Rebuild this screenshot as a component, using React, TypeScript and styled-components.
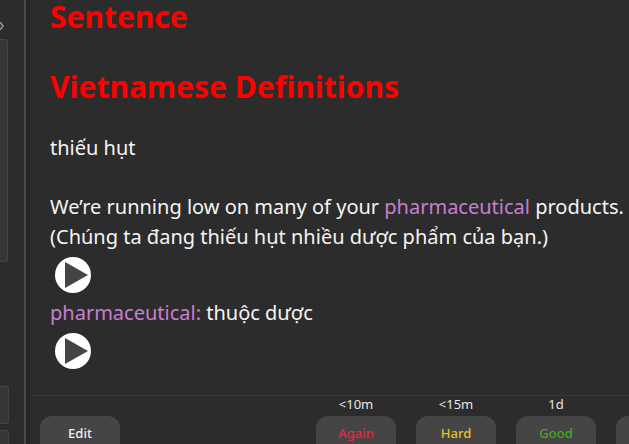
import React from "react";
import styled, { createGlobalStyle } from "styled-components";

const GlobalStyle = createGlobalStyle`
  html, body {
    margin: 0;
    padding: 0;
    width: 629px;
    height: 444px;
    overflow: hidden;
    background: #2c2c2c;
  }
`;

const answers = [
  { id: "again", due: "<10m", label: "Again", color: "#e02a44" },
  { id: "hard", due: "<15m", label: "Hard", color: "#e6c024" },
  { id: "good", due: "1d", label: "Good", color: "#42ab1e" },
  { id: "easy", due: "", label: "", color: "#3f8ad9" },
];

function PlayButton() {
  return (
    <ReplayIcon viewBox="0 0 36 36" aria-hidden="true">
      <circle cx="18" cy="18" r="18" fill="#ffffff" />
      <path d="M10 5 L33 18 L10 31 Z" fill="#444444" />
    </ReplayIcon>
  );
}

export default function App() {
  return (
    <>
      <GlobalStyle />
      <Window>
        <Sidebar>
          <Chevron viewBox="0 0 4 8" aria-hidden="true">
            <path d="M0 0 L3 4 L0 8" fill="none" stroke="#9a9a9a" strokeWidth="1.4" />
          </Chevron>
          <SidePanel />
          <SideBox />
          <SideBoxSmall />
        </Sidebar>
        <Divider />
        <Main>
          <Card>
            <Heading>Sentence</Heading>
            <Heading>Vietnamese Definitions</Heading>
            <Line>thiếu hụt</Line>
            <Sentence>
              We’re running low on many of your <Term>pharmaceutical</Term> products.
            </Sentence>
            <Translation>(Chúng ta đang thiếu hụt nhiều dược phẩm của bạn.)</Translation>
            <ReplayRow>
              <PlayButton />
            </ReplayRow>
            <WordLine>
              <Term>pharmaceutical:</Term> thuộc dược
            </WordLine>
            <ReplayRow>
              <PlayButton />
            </ReplayRow>
          </Card>
          <BottomBar>
            <EditColumn>
              <BarButton>Edit</BarButton>
            </EditColumn>
            <AnswerGroup>
              {answers.map((a) => (
                <AnswerColumn key={a.id}>
                  <Due>{a.due}</Due>
                  <BarButton $color={a.color}>{a.label}</BarButton>
                </AnswerColumn>
              ))}
            </AnswerGroup>
          </BottomBar>
        </Main>
      </Window>
    </>
  );
}

const Window = styled.div`
  display: flex;
  width: 629px;
  height: 444px;
  overflow: hidden;
  background: #2c2c2c;
  font-family: "Noto Sans", sans-serif;
  color: #f4f4f4;
`;

const Sidebar = styled.aside`
  position: relative;
  flex: 0 0 24px;
  display: flex;
  flex-direction: column;
  background: #2c2c2c;
`;

const Chevron = styled.svg`
  position: absolute;
  left: 0;
  top: 22px;
  width: 4px;
  height: 8px;
`;

const SidePanel = styled.div`
  flex: none;
  width: 8px;
  height: 223px;
  margin-top: 39px;
  background: #363636;
  border: 1px solid #444444;
  border-left: none;
  border-radius: 0 3px 3px 0;
  box-sizing: border-box;
`;

const SideBox = styled.div`
  flex: none;
  width: 9px;
  height: 38px;
  margin-top: 124px;
  background: #363636;
  border: 1px solid #444444;
  border-left: none;
  border-radius: 0 3px 3px 0;
  box-sizing: border-box;
`;

const SideBoxSmall = styled(SideBox)`
  margin-top: 6px;
`;

const Divider = styled.div`
  flex: 0 0 6px;
  box-sizing: border-box;
  background: #262626;
  border-left: 2px solid #4a4a4a;
`;

const Main = styled.main`
  flex: 1;
  min-width: 0;
  display: flex;
  flex-direction: column;
  background: #2c2c2c;
`;

const Card = styled.section`
  flex: 0 0 395px;
  box-sizing: border-box;
  padding: 0 0 0 20px;
  overflow: hidden;
  font-size: 20px;
  line-height: 30px;
  white-space: nowrap;
`;

const Heading = styled.h2`
  margin: 0 0 40px;
  font-size: 30px;
  line-height: 30px;
  font-weight: 700;
  color: #ff0000;
  &:first-child {
    margin-top: 2px;
  }
`;

const Line = styled.div`
  margin-top: -9px;
  margin-bottom: 29px;
`;

const Sentence = styled.div``;

const Translation = styled.div``;

const WordLine = styled.div``;

const Term = styled.span`
  color: #c77fd0;
`;

const ReplayRow = styled.div`
  display: flex;
  height: 46px;
  align-items: center;
  padding-left: 5px;
`;

const ReplayIcon = styled.svg`
  width: 36px;
  height: 36px;
`;

const BottomBar = styled.footer`
  flex: 1;
  display: flex;
  justify-content: space-between;
  padding: 0 0 0 10px;
  border-top: 1px solid #383838;
`;

const EditColumn = styled.div`
  display: flex;
  align-items: flex-start;
  padding-top: 20px;
`;

const AnswerGroup = styled.div`
  display: flex;
  gap: 20px;
  margin-right: -67px;
`;

const AnswerColumn = styled.div`
  display: flex;
  flex-direction: column;
  align-items: center;
`;

const Due = styled.div`
  height: 20px;
  font-size: 13px;
  line-height: 16px;
  color: #e8e8e8;
`;

const BarButton = styled.button<{ $color?: string }>`
  width: 80px;
  height: 40px;
  padding: 0 0 6px;
  border: none;
  border-radius: 12px;
  background: #454545;
  font-family: "Noto Sans", sans-serif;
  font-size: 13px;
  font-weight: 500;
  color: ${(props) => props.$color || "#f0f0f0"};
`;
